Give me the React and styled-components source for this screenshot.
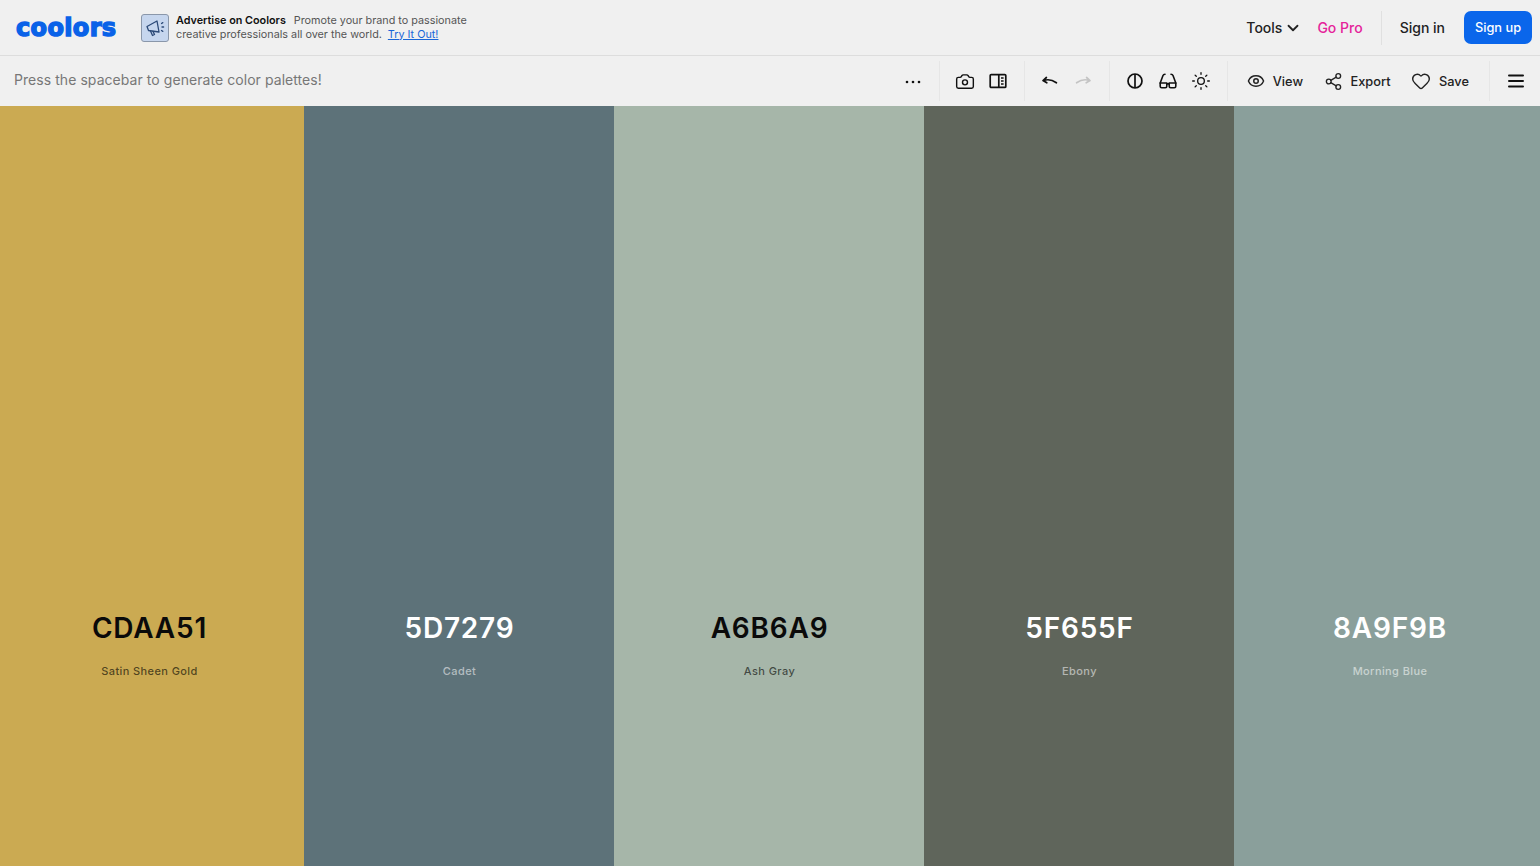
import React from "react";
import styled, { createGlobalStyle } from "styled-components";
import { Camera, ChevronDown, Eye, Heart, Share2, Sun } from "lucide-react";

const swatches = [
  { hex: "CDAA51", name: "Satin Sheen Gold", bg: "#cbaa52", dark: true, width: 304, pad: "0 5px 0 0" },
  { hex: "5D7279", name: "Cadet", bg: "#5d7279", width: 310, pad: "0 0 0 1px" },
  { hex: "A6B6A9", name: "Ash Gray", bg: "#a6b6a9", dark: true, width: 310, pad: "0 0 0 1px" },
  { hex: "5F655F", name: "Ebony", bg: "#5f655b", width: 310, pad: "0 0 0 1px" },
  { hex: "8A9F9B", name: "Morning Blue", bg: "#8a9f9b", width: 306, pad: "0 0 0 6px" }
];

export default function App() {
  return (
    <Page>
      <GlobalStyle />
      <TopBar>
        <Logo>coolors</Logo>
        <AdIcon>
          <svg width="22" height="22" viewBox="0 0 22 22" fill="none" stroke="#2c4a78" strokeWidth="1.3" strokeLinejoin="round" strokeLinecap="round">
            <path d="M3 9.5 13 4 15 15 4.5 13.5Z" />
            <path d="M6.5 14 8.5 18.5 10.5 17.5 9 14.4" />
            <path d="M17.5 6.5 18.8 5.6M18 10h1.6M17.5 13.5l1.3.9" />
          </svg>
        </AdIcon>
        <AdText>
          <AdLine>
            <strong>Advertise on Coolors</strong>Promote your brand to passionate
          </AdLine>
          <AdLine>
            creative professionals all over the world.<AdLink>Try It Out!</AdLink>
          </AdLine>
        </AdText>
        <Spacer />
        <NavItem>
          Tools
          <ChevronDown size={18} strokeWidth={2.4} />
        </NavItem>
        <ProLink>Go Pro</ProLink>
        <NavDivider />
        <SignIn>Sign in</SignIn>
        <SignUp>Sign up</SignUp>
      </TopBar>
      <ToolBar>
        <Hint>Press the spacebar to generate color palettes!</Hint>
        <Spacer />
        <Group>
          <IconBtn>
            <svg width="20" height="20" viewBox="0 0 20 20" fill="#111">
              <circle cx="4" cy="11" r="1.3" />
              <circle cx="10" cy="11" r="1.3" />
              <circle cx="16" cy="11" r="1.3" />
            </svg>
          </IconBtn>
        </Group>
        <Group>
          <IconBtn><Camera size={21} strokeWidth={1.7} /></IconBtn>
          <IconBtn>
            <svg width="20" height="20" viewBox="0 0 20 20" fill="none" stroke="#111" strokeWidth="1.7">
              <rect x="2.2" y="3.6" width="15.6" height="12.8" rx="1" />
              <path d="M10.8 3.6v12.8M13 7h2.6M13 10h2.6M13 13h2.6" />
            </svg>
          </IconBtn>
        </Group>
        <Group>
          <IconBtn>
            <svg width="20" height="20" viewBox="0 0 20 20" fill="none" stroke="#111" strokeWidth="1.7" strokeLinecap="round" strokeLinejoin="round">
              <path d="M6.4 6.5 3 9.6l3.8 2.2M3.4 9.6c4.4-1.6 8.6-1 13 2.2" />
            </svg>
          </IconBtn>
          <IconBtn>
            <svg width="20" height="20" viewBox="0 0 20 20" fill="none" stroke="#c4c4c4" strokeWidth="1.7" strokeLinecap="round" strokeLinejoin="round">
              <path d="M13.6 6.5 17 9.6l-3.8 2.2M16.6 9.6c-4.4-1.6-8.6-1-13 2.2" />
            </svg>
          </IconBtn>
        </Group>
        <Group>
          <IconBtn>
            <svg width="20" height="20" viewBox="0 0 20 20" fill="none" stroke="#111" strokeWidth="1.7">
              <circle cx="10" cy="10" r="7" />
              <path d="M10 3v14" />
            </svg>
          </IconBtn>
          <IconBtn>
            <svg width="20" height="20" viewBox="0 0 20 20" fill="none" stroke="#111" strokeWidth="1.6" strokeLinecap="round" strokeLinejoin="round">
              <path d="M2.2 12 5 4.5c.3-.8 1-1.2 2-1.2M17.8 12 15 4.5c-.3-.8-1-1.2-2-1.2" />
              <path d="M2.2 12h6.6v3.2c0 .9-.6 1.5-1.5 1.5H3.7c-.9 0-1.5-.6-1.5-1.5ZM11.2 12h6.6v3.2c0 .9-.6 1.5-1.5 1.5h-3.6c-.9 0-1.5-.6-1.5-1.5ZM8.8 13.2c.7-.4 1.7-.4 2.4 0" />
            </svg>
          </IconBtn>
          <IconBtn><Sun size={20} strokeWidth={1.6} /></IconBtn>
        </Group>
        <Actions>
          <Action><Eye size={18} strokeWidth={2} />View</Action>
          <Action><Share2 size={19} strokeWidth={1.7} />Export</Action>
          <Action><Heart size={20} strokeWidth={1.7} />Save</Action>
        </Actions>
        <MenuBox>
          <svg width="18" height="16" viewBox="0 0 18 16" fill="none" stroke="#111" strokeWidth="2" strokeLinecap="round">
            <path d="M2 2.5h14M2 8h14M2 13.5h14" />
          </svg>
        </MenuBox>
      </ToolBar>
      <Palette>
        {swatches.map(s => (
          <Swatch key={s.hex} $bg={s.bg} $width={s.width} $pad={s.pad}>
            <Hex $dark={s.dark}>{s.hex}</Hex>
            <ColorName $dark={s.dark}>{s.name}</ColorName>
          </Swatch>
        ))}
      </Palette>
    </Page>
  );
}

const GlobalStyle = createGlobalStyle`
  html, body {
    margin: 0;
    padding: 0;
    height: 100%;
    overflow: hidden;
  }
  body {
    font-family: Inter, "Liberation Sans", sans-serif;
    color: #111;
    background: #f0f0f0;
  }
`;

const Page = styled.div`
  display: flex;
  flex-direction: column;
  width: 1540px;
  height: 866px;
  background: #f0f0f0;
`;

const TopBar = styled.header`
  display: flex;
  align-items: center;
  height: 55px;
  padding: 0 8px 0 16px;
  border-bottom: 1px solid #dddddd;
  box-sizing: content-box;
`;

const Logo = styled.div`
  width: 101px;
  margin: 0 24px 0 0;
  font-family: "DejaVu Sans", sans-serif;
  font-size: 24px;
  font-weight: 700;
  line-height: 1;
  letter-spacing: 0.35px;
  color: #0a62e8;
  -webkit-text-stroke: 1.4px #0a62e8;
`;

const AdIcon = styled.div`
  display: flex;
  align-items: center;
  justify-content: center;
  width: 26px;
  height: 26px;
  margin-right: 7px;
  border: 1px solid #8a97aa;
  border-radius: 3px;
  background: #c6d6ee;
`;

const AdText = styled.div`
  display: flex;
  flex-direction: column;
  font-size: 10.8px;
  line-height: 14px;
  color: #555;
`;

const AdLine = styled.div`
  white-space: nowrap;
  strong {
    margin-right: 8px;
    font-weight: 600;
    color: #111;
  }
`;

const AdLink = styled.a`
  margin-left: 6px;
  color: #1a66d8;
  text-decoration: underline;
`;

const Spacer = styled.div`
  flex: 1;
`;

const NavItem = styled.div`
  display: flex;
  align-items: center;
  gap: 2px;
  margin-right: 15px;
  font-size: 14px;
  font-weight: 500;
  color: #222;
`;

const ProLink = styled.div`
  font-size: 14px;
  font-weight: 500;
  color: #e5249a;
`;

const NavDivider = styled.div`
  width: 1px;
  height: 34px;
  margin: 0 18px;
  background: #e0e0e0;
`;

const SignIn = styled.div`
  margin-right: 19px;
  font-size: 14px;
  font-weight: 500;
  color: #222;
`;

const SignUp = styled.button`
  width: 68px;
  height: 33px;
  padding: 0;
  border: 0;
  border-radius: 7px;
  background: #0a66eb;
  color: #fff;
  font-family: inherit;
  font-size: 12.8px;
  font-weight: 500;
`;

const ToolBar = styled.div`
  display: flex;
  align-items: center;
  height: 50px;
`;

const Hint = styled.div`
  margin-top: -3px;
  padding-left: 14px;
  font-size: 14px;
  letter-spacing: 0.06px;
  color: #777;
`;

const Group = styled.div`
  display: flex;
  align-items: center;
  gap: 13px;
  height: 40px;
  padding: 0 15.5px;
  border-right: 1px solid #e6e6e6;
`;

const IconBtn = styled.div`
  display: flex;
  align-items: center;
  justify-content: center;
  width: 20px;
  height: 20px;
  color: #111;
`;

const Actions = styled.div`
  display: flex;
  align-items: center;
  gap: 20.5px;
  height: 40px;
  padding: 0 20px 0 19px;
  border-right: 1px solid #e6e6e6;
`;

const Action = styled.div`
  display: flex;
  align-items: center;
  gap: 8px;
  font-size: 12.8px;
  font-weight: 500;
  color: #222;
`;

const MenuBox = styled.div`
  display: flex;
  align-items: center;
  justify-content: center;
  width: 50px;
  padding-left: 2px;
  box-sizing: border-box;
`;

const Palette = styled.main`
  display: flex;
  flex: 1;
`;

const Swatch = styled.section`
  display: flex;
  flex-direction: column;
  align-items: center;
  box-sizing: border-box;
  width: ${p => p.$width}px;
  padding: ${p => p.$pad};
  padding-top: 504px;
  background: ${p => p.$bg};
`;

const Hex = styled.div`
  font-size: 28px;
  font-weight: 600;
  line-height: 36px;
  letter-spacing: 0.8px;
  color: ${p => (p.$dark ? "#0a0a0a" : "#fff")};
`;

const ColorName = styled.div`
  margin-top: 18px;
  font-size: 11px;
  font-weight: 500;
  line-height: 14px;
  letter-spacing: 0.4px;
  color: ${p => (p.$dark ? "rgba(0,0,0,0.62)" : "rgba(255,255,255,0.55)")};
`;
